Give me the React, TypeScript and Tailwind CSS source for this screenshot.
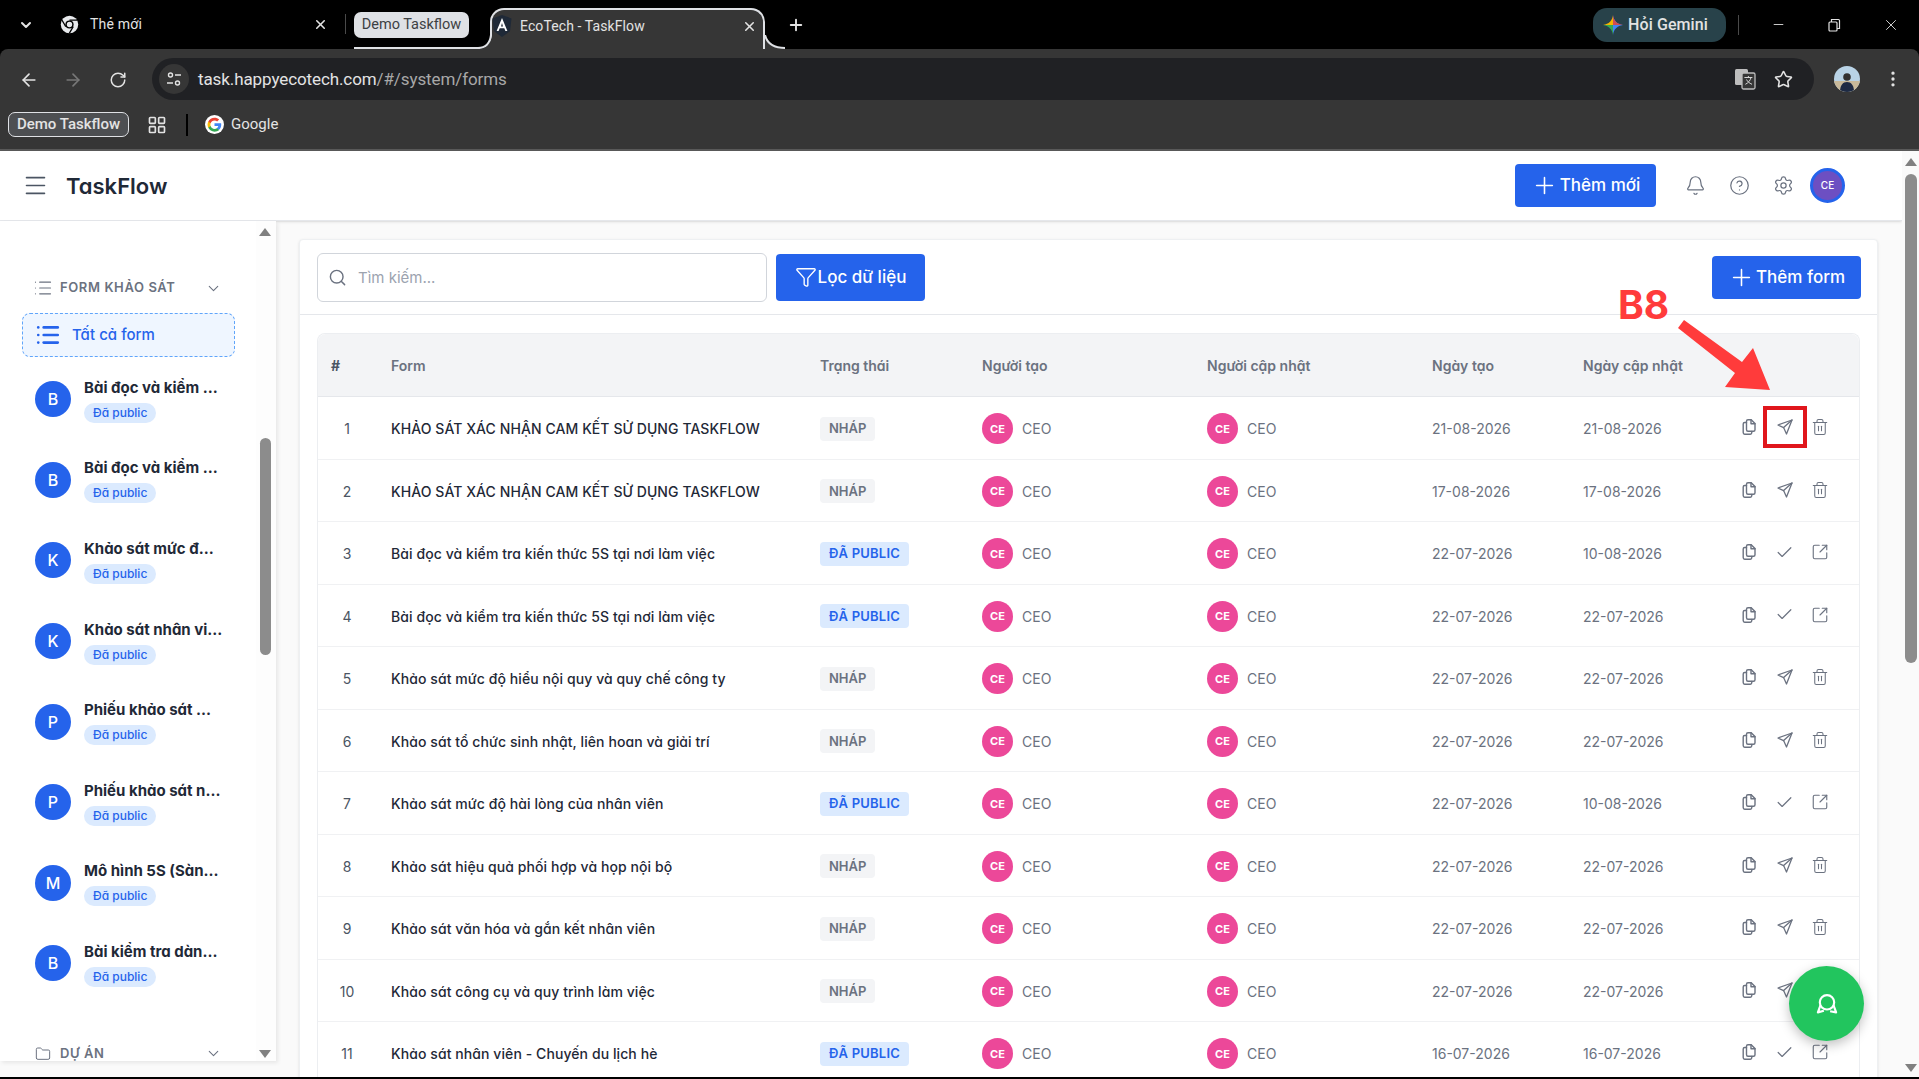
import { Bell, Check, ChevronDown, CircleHelp, Folder, List, Menu, Plus, Search, Settings, SquareArrowOutUpRight, Star, Trash2, X, ArrowLeft, ArrowRight, RotateCw, EllipsisVertical, Minus, Filter, LayoutGrid } from "lucide-react";

type Row = { id: number; title: string; published: boolean; created: string; updated: string };

const DRAFT_A = "KHẢO SÁT XÁC NHẬN CAM KẾT SỬ DỤNG TASKFLOW";
const READ_5S = "Bài đọc và kiểm tra kiến thức 5S tại nơi làm việc";

const rows: Row[] = [
  { id: 1, title: DRAFT_A, published: false, created: "21-08-2026", updated: "21-08-2026" },
  { id: 2, title: DRAFT_A, published: false, created: "17-08-2026", updated: "17-08-2026" },
  { id: 3, title: READ_5S, published: true, created: "22-07-2026", updated: "10-08-2026" },
  { id: 4, title: READ_5S, published: true, created: "22-07-2026", updated: "22-07-2026" },
  { id: 5, title: "Khảo sát mức độ hiểu nội quy và quy chế công ty", published: false, created: "22-07-2026", updated: "22-07-2026" },
  { id: 6, title: "Khảo sát tổ chức sinh nhật, liên hoan và giải trí", published: false, created: "22-07-2026", updated: "22-07-2026" },
  { id: 7, title: "Khảo sát mức độ hài lòng của nhân viên", published: true, created: "22-07-2026", updated: "10-08-2026" },
  { id: 8, title: "Khảo sát hiệu quả phối hợp và họp nội bộ", published: false, created: "22-07-2026", updated: "22-07-2026" },
  { id: 9, title: "Khảo sát văn hóa và gắn kết nhân viên", published: false, created: "22-07-2026", updated: "22-07-2026" },
  { id: 10, title: "Khảo sát công cụ và quy trình làm việc", published: false, created: "22-07-2026", updated: "22-07-2026" },
  { id: 11, title: "Khảo sát nhân viên - Chuyến du lịch hè", published: true, created: "16-07-2026", updated: "16-07-2026" },
];

const sideItems = [
  { letter: "B", title: "Bài đọc và kiểm ..." },
  { letter: "B", title: "Bài đọc và kiểm ..." },
  { letter: "K", title: "Khảo sát mức đ..." },
  { letter: "K", title: "Khảo sát nhân vi..." },
  { letter: "P", title: "Phiếu khảo sát ..." },
  { letter: "P", title: "Phiếu khảo sát n..." },
  { letter: "M", title: "Mô hình 5S (Sàn..." },
  { letter: "B", title: "Bài kiểm tra dàn..." },
];

const tableCols = "grid grid-cols-[73px_429px_162px_225px_225px_151px_1fr] items-center";

function PlaneIcon() {
  return (
    <svg width="18" height="18" viewBox="0 0 18 18" fill="none" stroke="currentColor" strokeWidth="1.3" strokeLinejoin="round" strokeLinecap="round">
      <path d="M16 2 2 7l5.6 2.6L10.5 16z" />
      <path d="M16 2 7.6 9.6" />
    </svg>
  );
}

function CopyIcon() {
  return (
    <svg width="18" height="18" viewBox="0 0 18 18" fill="none" stroke="currentColor" strokeWidth="1.4" strokeLinejoin="round" strokeLinecap="round">
      <path d="M6.500 11.500V3.200c0-.9.7-1.500 1.500-1.500h3.200l3.800 3.900v6.200c0 .9-.6 1.500-1.500 1.500H8c-.8 0-1.500-.7-1.500-1.800z" />
      <path d="M11 1.800v4h4" />
      <path d="M6.500 4.500H4.700c-.9 0-1.500.6-1.500 1.500v8.500c0 .9.600 1.700 1.500 1.700h5.600c.9 0 1.500-.7 1.500-1.700v-1" />
    </svg>
  );
}

function ChatBubbles() {
  return (
    <svg width="24" height="24" viewBox="0 0 20 20" fill="none" stroke="#fff" strokeWidth="1.8" strokeLinejoin="round">
      <circle cx="10" cy="8.6" r="6" />
      <path d="M4.6 11 2.4 17l5-1.4M15.4 11l2.2 6-5-1" />
    </svg>
  );
}

function ChromeMark() {
  return (
    <svg width="19" height="19" viewBox="0 0 24 24">
      <circle cx="12" cy="12" r="11" fill="#e8eaed" />
      <circle cx="12" cy="12" r="5.2" fill="#000" />
      <circle cx="12" cy="12" r="3.4" fill="#e8eaed" />
      <path d="M12 6.6h10M7.3 14.7 2.4 6.3M16.7 14.6l-5 8.6" stroke="#000" strokeWidth="1.6" />
    </svg>
  );
}

function AngularMark() {
  return (
    <svg width="20" height="22" viewBox="0 0 20 22">
      <path d="M10 0 19.5 3.4 18 16.3 10 22 2 16.3.5 3.4z" fill="#1f2937" />
      <path d="M10 3 4.6 16h2l1.1-2.8h4.6l1.100 2.8h2zM9 11.4 10 8l1 3.400z" fill="#fff" />
    </svg>
  );
}

function GoogleMark() {
  return (
    <svg width="19" height="19" viewBox="0 0 48 48">
      <circle cx="24" cy="24" r="24" fill="#fff" />
      <path fill="#4285f4" d="M41 24.5c0-1.3-.1-2.300-.3-3.400H24v6.500h9.600c-.4 2.200-1.700 4-3.500 5.300v4.300h5.700C39.100 34.100 41 29.700 41 24.500z" />
      <path fill="#34a853" d="M24 42c4.700 0 8.700-1.600 11.700-4.300L30 33.400c-1.600 1.100-3.600 1.700-6 1.700-4.600 0-8.500-3.100-9.900-7.300H8.300v4.500C11.200 38 17.100 42 24 42z" />
      <path fill="#fbbc05" d="M14.100 27.800c-.7-2.200-.7-4.500 0-6.700v-4.500H8.300c-2.400 4.800-2.400 10.900 0 15.700z" />
      <path fill="#ea4335" d="M24 13.700c2.600 0 4.900.9 6.700 2.600l5-5C32.700 8.500 28.700 7 24 7c-6.900 0-12.800 4-15.700 9.600l5.800 4.500c1.400-4.200 5.300-7.400 9.900-7.400z" />
    </svg>
  );
}

function GeminiMark() {
  return (
    <svg width="20" height="20" viewBox="0 0 20 20">
      <path d="M10 0c.6 5.400 4 9.200 10 10-5.600.8-9.400 4.400-10 10z" fill="#4285f4" />
      <path d="M10 0C9.400 5.400 6 9.200 0 10h10z" fill="#f4b400" />
      <path d="M0 10c5.600.8 9.400 4.400 10 10V10z" fill="#34a853" />
      <path d="M10 0v10h10C14 9.200 10.600 5.400 10 0z" fill="#ea4335" opacity="0.85" />
    </svg>
  );
}

function TranslateMark() {
  return (
    <svg width="22" height="22" viewBox="0 0 22 22">
      <rect x="1" y="1" width="13" height="16" rx="1.500" fill="#bdbdbd" />
      <rect x="8" y="5" width="13" height="16" rx="1.500" fill="#363636" stroke="#bdbdbd" strokeWidth="1.300" />
      <path d="M10.400 9.500h8M14.400 8v1.500M17 9.500c-.8 3-2.400 5.200-5.600 6.800M12.500 11.500c1 2 2.700 3.600 5.500 4.800" stroke="#d6d6d6" strokeWidth="1" fill="none" />
    </svg>
  );
}

function ProfileMark() {
  return (
    <svg width="26" height="26" viewBox="0 0 26 26">
      <defs>
        <clipPath id="profile-clip">
          <circle cx="13" cy="13" r="13" />
        </clipPath>
      </defs>
      <g clipPath="url(#profile-clip)">
        <rect width="26" height="26" fill="#b9d3e6" />
        <rect y="15" width="26" height="11" fill="#c8b99a" />
        <path d="M6 26c0-7 3-10 7-10s7 3 7 10z" fill="#1d2a44" />
        <circle cx="13" cy="11" r="3.800" fill="#33302f" />
      </g>
    </svg>
  );
}

function BrowserChrome() {
  return (
    <div className="shrink-0 font-['Roboto',sans-serif]">
      {/* tab strip */}
      <div className="flex h-[49px] items-end bg-black text-[#e3e3e3]">
        <div className="flex h-full w-[60px] items-center pl-[18px]">
          <ChevronDown size={16} strokeWidth={3} />
        </div>
        <div className="flex h-full w-[285px] items-center pr-[17px]">
          <ChromeMark />
          <span className="ml-[11px] flex-1 text-[14px] tracking-[0.2px]">Thẻ mới</span>
          <X size={15} strokeWidth={2.5} />
        </div>
        <div className="mb-[15px] h-[20px] w-px bg-[#4a4a4a]" />
        <div className="relative ml-2 flex h-full w-[136px] items-start pt-3">
          <div className="flex h-[26px] w-[115px] items-center justify-center rounded-[7px] bg-[#dfe1e5] text-[14.5px] text-[#3c4043]">Demo Taskflow</div>
          <div className="absolute bottom-0 left-0 right-[10px] h-[2px] bg-[#dfe1e5]" />
        </div>
        <div className="relative flex h-[41px] w-[275px] items-center rounded-t-[14px] border-x-2 border-t-2 border-[#dfe1e5] bg-[#363636] pb-[7px] pr-[6px]">
          <svg className="absolute -left-[14px] bottom-0" width="14" height="14" viewBox="0 0 14 14">
            <path d="M14 0v14H0c8 0 12-4 14-14z" fill="#363636" />
            <path d="M13 0C12 8 8 13 0 13" fill="none" stroke="#dfe1e5" strokeWidth="2" />
          </svg>
          <svg className="absolute -right-[22px] bottom-0" width="20" height="14" viewBox="0 0 20 14">
            <path d="M0 0v14h20C12 14 4 10 0 0z" fill="#363636" />
            <path d="M0 0c2 8 8 13 20 13" fill="none" stroke="#dfe1e5" strokeWidth="2" />
          </svg>
          <AngularMark />
          <span className="ml-[8px] flex-1 text-[14px] tracking-[0.1px]">EcoTech - TaskFlow</span>
          <X size={15} strokeWidth={2.5} />
        </div>
        <div className="flex h-full items-center pl-[22px]">
          <Plus size={18} strokeWidth={2.5} />
        </div>
        <div className="flex-1" />
        <div className="flex h-full items-center">
          <div className="flex h-[34px] w-[133px] items-center gap-[5px] rounded-[14px] bg-[#28424a] pl-[10px] text-[16px] font-medium tracking-[0.1px]">
            <GeminiMark />
            <span>Hỏi Gemini</span>
          </div>
          <div className="ml-3 h-[20px] w-px bg-[#4a4a4a]" />
          <div className="flex w-[180px] items-center justify-between pl-[32px] pr-[19px]">
            <Minus size={15} strokeWidth={1.4} />
            <svg width="14" height="14" viewBox="0 0 14 14" fill="none" stroke="currentColor" strokeWidth="1.200">
              <rect x="2" y="4" width="8" height="9" rx="1" />
              <path d="M4.500 4V1.500h7a1 1 0 0 1 1 1v8H10" />
            </svg>
            <X size={18} strokeWidth={1.2} />
          </div>
        </div>
      </div>
      {/* address bar */}
      <div className="flex h-[51px] items-start rounded-t-lg bg-[#363636] pt-[9px] text-[#e3e3e3]">
        <div className="flex h-[42px] w-[152px] items-center gap-[24px] pl-[19px] pt-[1px]">
          <ArrowLeft size={20} />
          <ArrowRight size={20} className="text-[#777]" />
          <RotateCw size={18} className="ml-[2px]" />
        </div>
        <div className="flex h-[42px] w-[1662px] items-center rounded-full bg-[#202124] pl-[7px] pr-[21px]">
          <div className="flex h-[30px] w-[30px] items-center justify-center rounded-full bg-[#363636]">
            <svg width="16" height="16" viewBox="0 0 16 16" fill="none" stroke="#e3e3e3" strokeWidth="1.400">
              <circle cx="4.500" cy="4" r="2" />
              <path d="M9 4h6M1 12h6" />
              <circle cx="11.500" cy="12" r="2" />
            </svg>
          </div>
          <span className="ml-[9px] flex-1 pt-[2px] text-[17px] tracking-[-0.1px]">
            task.happyecotech.com<span className="text-[#a8a8a8]">/#/system/forms</span>
          </span>
          <TranslateMark />
          <Star size={19} className="ml-[18px]" />
        </div>
        <div className="flex h-[42px] flex-1 items-center justify-between pl-[20px] pr-[16px]">
          <ProfileMark />
          <EllipsisVertical size={20} />
        </div>
      </div>
      {/* bookmarks */}
      <div className="flex h-[51px] items-center border-b-2 border-[#5a5a5a] bg-[#363636] pl-[8px] text-[#e3e3e3]">
        <div className="flex h-[25px] w-[121px] items-center justify-center rounded-[7px] border border-[#dfe1e5] bg-[#4d4f52] text-[15px] font-medium">Demo Taskflow</div>
        <LayoutGrid size={20} className="ml-[18px]" />
        <div className="ml-[19px] h-[22px] w-[2px] bg-black" />
        <div className="ml-[17px] flex items-center gap-[7px] text-[15px]">
          <GoogleMark />
          <span>Google</span>
        </div>
      </div>
    </div>
  );
}

function Sidebar() {
  return (
    <aside className="relative flex h-[840px] w-[276px] shrink-0 overflow-hidden bg-white shadow-[2px_2px_4px_rgba(0,0,0,0.08)]">
      <div className="flex w-[256px] flex-col pt-[57px]">
        <div className="flex h-[20px] shrink-0 items-center pl-[33px] pr-[34px] text-[#6b7280]">
          <List size={20} strokeWidth={1.4} />
          <span className="ml-[7px] flex-1 text-[13px] font-semibold tracking-[0.6px]">FORM KHẢO SÁT</span>
          <ChevronDown size={17} strokeWidth={1.5} />
        </div>
        <div className="ml-[22px] mt-[15px] flex h-[44px] w-[213px] shrink-0 items-center rounded-lg border border-dashed border-[#60a5fa] bg-[#eff6ff] pl-[12px] text-[15px] font-medium text-[#2563eb]">
          <List size={26} strokeWidth={2.4} />
          <span className="ml-[11px]">Tất cả form</span>
        </div>
        <div className="mt-[2px] flex shrink-0 flex-col">
          {sideItems.map((item, i) => (
            <div key={i} className="flex h-[80.6px] shrink-0 items-center pl-[35px]">
              <div className="flex h-[36px] w-[36px] items-center justify-center rounded-full bg-[#2563eb] text-[16px] font-medium text-white">{item.letter}</div>
              <div className="ml-[13px] mt-[2px] flex flex-col items-start">
                <span className="text-[15px] font-bold leading-[20px] text-[#1f2937]">{item.title}</span>
                <span className="mt-[5px] flex h-[20px] items-center rounded-full bg-[#dbeafe] px-[9px] text-[12px] font-medium text-[#2563eb]">Đã public</span>
              </div>
            </div>
          ))}
        </div>
        <div className="mt-[40px] flex h-[20px] shrink-0 items-center pl-[35px] pr-[34px] text-[#6b7280]">
          <Folder size={16} strokeWidth={1.5} />
          <span className="ml-[9px] flex-1 text-[13px] font-semibold tracking-[0.6px]">DỰ ÁN</span>
          <ChevronDown size={17} strokeWidth={1.5} />
        </div>
      </div>
      <div className="flex w-[20px] flex-col items-center bg-[#fdfdfd] pr-[2px] pt-[7px]">
        <div className="h-0 w-0 border-x-[6px] border-b-[8px] border-x-transparent border-b-[#808080]" />
        <div className="mt-[202px] h-[217px] w-[11px] rounded-full bg-[#8c8c8c]" />
        <div className="mt-auto mb-[3px] h-0 w-0 border-x-[6px] border-t-[8px] border-x-transparent border-t-[#808080]" />
      </div>
    </aside>
  );
}

function TableRow({ row }: { row: Row }) {
  return (
    <div className={`${tableCols} h-[62.5px] border-b border-[#f0f1f3] pt-[2px] text-[14px] text-[#6b7280]`}>
      <span className="w-[58px] text-center text-[#4b5563]">{row.id}</span>
      <span className="font-medium tracking-[0.08px] text-[#1f2937]">{row.title}</span>
      <span>
        {row.published ? (
          <span className="inline-flex h-[24px] items-center rounded bg-[#dbeafe] px-[9px] text-[13px] font-semibold tracking-[0.2px] text-[#2563eb]">ĐÃ PUBLIC</span>
        ) : (
          <span className="inline-flex h-[24px] items-center rounded bg-[#f3f4f6] px-[9px] text-[13px] font-semibold text-[#6b7280]">NHÁP</span>
        )}
      </span>
      <span className="flex items-center gap-[9px]">
        <span className="flex h-[31px] w-[31px] items-center justify-center rounded-full bg-[#ec4899] text-[11px] font-bold text-white">CE</span>
        CEO
      </span>
      <span className="flex items-center gap-[9px]">
        <span className="flex h-[31px] w-[31px] items-center justify-center rounded-full bg-[#ec4899] text-[11px] font-bold text-white">CE</span>
        CEO
      </span>
      <span>{row.created}</span>
      <div className="flex items-center justify-between">
        <span>{row.updated}</span>
        <div className="mr-[30px] -mt-[3px] flex w-[89px] items-center justify-between text-[#6b7280]">
          <CopyIcon />
          {row.published ? <Check size={19} strokeWidth={1.5} /> : <PlaneIcon />}
          {row.published ? <SquareArrowOutUpRight size={18} strokeWidth={1.5} /> : <Trash2 size={18} strokeWidth={1.4} />}
        </div>
      </div>
    </div>
  );
}

function FormsCard() {
  return (
    <section className="ml-[23px] mt-[18px] w-[1579px] rounded-t border border-[#eef0f2] bg-white shadow-sm">
      <div className="flex h-[75px] items-center border-b border-[#e5e7eb] pl-[17px] pr-[16px]">
        <div className="flex h-[49px] w-[450px] items-center rounded-md border border-[#d1d5db] pl-[10px] text-[#9ca3af]">
          <Search size={19} strokeWidth={1.8} className="text-[#6b7280]" />
          <span className="ml-[11px] pt-[2px] text-[15px]">Tìm kiếm...</span>
        </div>
        <button className="ml-[9px] flex h-[47px] w-[149px] items-center justify-center gap-[1px] rounded bg-[#2563eb] text-[17px] font-medium text-white">
          <Filter size={22} strokeWidth={1.5} />
          <span className="pt-[2px]">Lọc dữ liệu</span>
        </button>
        <button className="ml-auto flex h-[43px] w-[149px] items-center justify-center gap-[1px] rounded bg-[#2563eb] text-[17px] font-medium text-white">
          <Plus size={27} strokeWidth={1.4} />
          <span className="pt-[2px]">Thêm form</span>
        </button>
      </div>
      <div className="mx-[17px] mt-[18px] rounded-t-lg border-x border-t border-[#eceef1]">
        <div className={`${tableCols} h-[63px] rounded-t-lg border-b border-[#e5e7eb] bg-[#f3f4f6] text-[14px] font-semibold text-[#6b7280]`}>
          <span className="pl-[13px] font-bold text-[#4b5563]">#</span>
          <span>Form</span>
          <span>Trạng thái</span>
          <span>Người tạo</span>
          <span>Người cập nhật</span>
          <span>Ngày tạo</span>
          <span>Ngày cập nhật</span>
        </div>
        {rows.map((row) => (
          <TableRow key={row.id} row={row} />
        ))}
      </div>
    </section>
  );
}

export default function App() {
  return (
    <div className="relative flex h-[1079px] w-full flex-col overflow-hidden bg-black font-['Inter',sans-serif] [font-feature-settings:'cv11']">
      <BrowserChrome />
      <div className="flex h-[926px] bg-[#fafafa]">
        <div className="flex min-w-0 flex-1 flex-col">
          <header className="flex h-[70px] shrink-0 items-center border-b border-[#e5e7eb] bg-white pl-[22px] pr-[57px] shadow-sm">
            <Menu size={27} strokeWidth={1.4} className="text-[#4b5563]" />
            <span className="ml-[17px] flex-1 pt-[1px] text-[22px] font-semibold text-[#1f2937]">TaskFlow</span>
            <button className="flex h-[43px] w-[141px] items-center justify-center gap-[2px] rounded bg-[#2563eb] text-[17px] font-medium text-white">
              <Plus size={27} strokeWidth={1.4} />
              Thêm mới
            </button>
            <Bell size={21} strokeWidth={1.4} className="ml-[29px] text-[#6b7280]" />
            <CircleHelp size={21} strokeWidth={1.4} className="ml-[23px] text-[#6b7280]" />
            <Settings size={21} strokeWidth={1.4} className="ml-[23px] text-[#6b7280]" />
            <div className="ml-[16px] flex h-[35px] w-[35px] items-center justify-center rounded-full border-[3px] border-[#2563eb] bg-[#6d4fc2] text-[10px] font-medium text-white">CE</div>
          </header>
          <div className="flex min-h-0 flex-1 items-start">
            <Sidebar />
            <div className="h-full min-w-0 flex-1 overflow-hidden">
              <FormsCard />
            </div>
          </div>
        </div>
        <div className="flex w-[17px] shrink-0 flex-col items-center bg-[#fafafa] pt-[7px]">
          <div className="h-0 w-0 border-x-[6px] border-b-[8px] border-x-transparent border-b-[#808080]" />
          <div className="mt-[8px] h-[489px] w-[12px] rounded-full bg-[#8c8c8c]" />
          <div className="mt-auto mb-[5px] h-0 w-0 border-x-[6px] border-t-[8px] border-x-transparent border-t-[#808080]" />
        </div>
      </div>

      {/* annotation laid over the capture */}
      <span className="absolute left-[1618px] top-[281px] text-[39px] font-bold leading-[48px] text-[#ff3b3b]">B8</span>
      <svg className="absolute left-[1675px] top-[315px]" width="100" height="80" viewBox="0 0 100 80">
        <polygon points="9,5 67,47 78,33 95,75 50,72 60,58 3,13" fill="#ff3b3b" />
      </svg>
      <div className="absolute left-[1763px] top-[406px] h-[42px] w-[44px] border-[4px] border-[#e0161c]" />

      <button className="absolute left-[1789px] top-[966px] flex h-[75px] w-[75px] items-center justify-center rounded-full bg-[#22c55e] shadow-[0_4px_12px_rgba(0,0,0,0.25)]">
        <ChatBubbles />
      </button>
    </div>
  );
}
